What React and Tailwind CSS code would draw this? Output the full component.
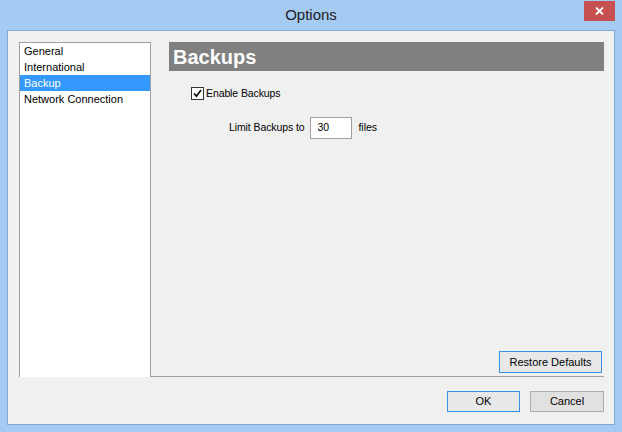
const items = ["General", "International", "Backup", "Network Connection"];

function Button({ children, focused, className = "" }) {
  return (
    <button
      type="button"
      className={`h-[21px] text-[11px] text-black ${
        focused ? "border border-[#3c8fe6] bg-[#e8e8e8]" : "border border-[#adadad] bg-[#e1e1e1]"
      } ${className}`}
    >
      {children}
    </button>
  );
}

export default function App() {
  return (
    <div
      className="w-[622px] h-[432px] bg-[#a5cbf3] flex flex-col"
      style={{ fontFamily: '"Liberation Sans", Arial, sans-serif' }}
    >
      <div className="relative h-[30px] flex items-center justify-center">
        <span className="text-[15px] text-[#202020] pt-[1px]">Options</span>
        <div className="absolute left-[584px] top-[1px] w-[31px] h-[20px] bg-[#c75050] flex items-center justify-center">
          <svg width="9" height="8" viewBox="0 0 9 8">
            <path d="M1 0.5 L8 7.5 M8 0.5 L1 7.5" stroke="white" strokeWidth="1.8" />
          </svg>
        </div>
      </div>

      <div className="mx-[7px] h-[395px] border border-[#83a9d8] bg-[#f0f0f0] flex flex-col">
        <div className="flex h-[346px] pt-[11px] pl-[11px] pr-[10px]">
          <div className="w-[132px] h-[335px] bg-white border-l border-t border-r border-[#a0a0a0]">
            {items.map((it) => (
              <div
                key={it}
                className={`h-[16px] leading-[16px] pl-[4px] text-[11px] ${
                  it === "Backup" ? "bg-[#3399ff] text-white" : "text-black"
                }`}
              >
                {it}
              </div>
            ))}
          </div>

          <div className="flex-1 h-[335px] border-b border-[#a0a0a0] flex flex-col pl-[18px]">
            <div className="h-[29px] bg-[#808080] flex items-center pl-[4px]">
              <span className="text-[20px] font-bold text-white leading-none">Backups</span>
            </div>

            <div className="mt-[15px] ml-[22px] h-[15px] flex items-center">
              <div className="w-[13px] h-[13px] border border-[#333] bg-white flex items-center justify-center">
                <svg width="9" height="9" viewBox="0 0 9 9">
                  <path d="M1 4.5 L3.5 7.2 L8 1" fill="none" stroke="#111" strokeWidth="1.8" />
                </svg>
              </div>
              <span className="ml-[2px] text-[10.5px] tracking-[-0.1px] text-black">Enable Backups</span>
            </div>

            <div className="mt-[16px] ml-[60px] flex items-center">
              <span className="text-[10.5px] tracking-[-0.1px] text-black">Limit Backups to</span>
              <div className="ml-[6px] w-[42px] h-[22px] bg-white border border-[#a0a0a0] flex items-center pl-[6px] text-[10.5px] text-black">
                30
              </div>
              <span className="ml-[6px] text-[10.5px] text-black">files</span>
            </div>

            <div className="mt-auto mb-[3px] flex justify-end pr-[2px]">
              <Button focused className="w-[103px] h-[22px]">
                Restore Defaults
              </Button>
            </div>
          </div>
        </div>

        <div className="flex justify-end gap-[10px] pt-[14px] pr-[10px]">
          <Button focused className="w-[73px]">OK</Button>
          <Button className="w-[74px]">Cancel</Button>
        </div>
      </div>
    </div>
  );
}
